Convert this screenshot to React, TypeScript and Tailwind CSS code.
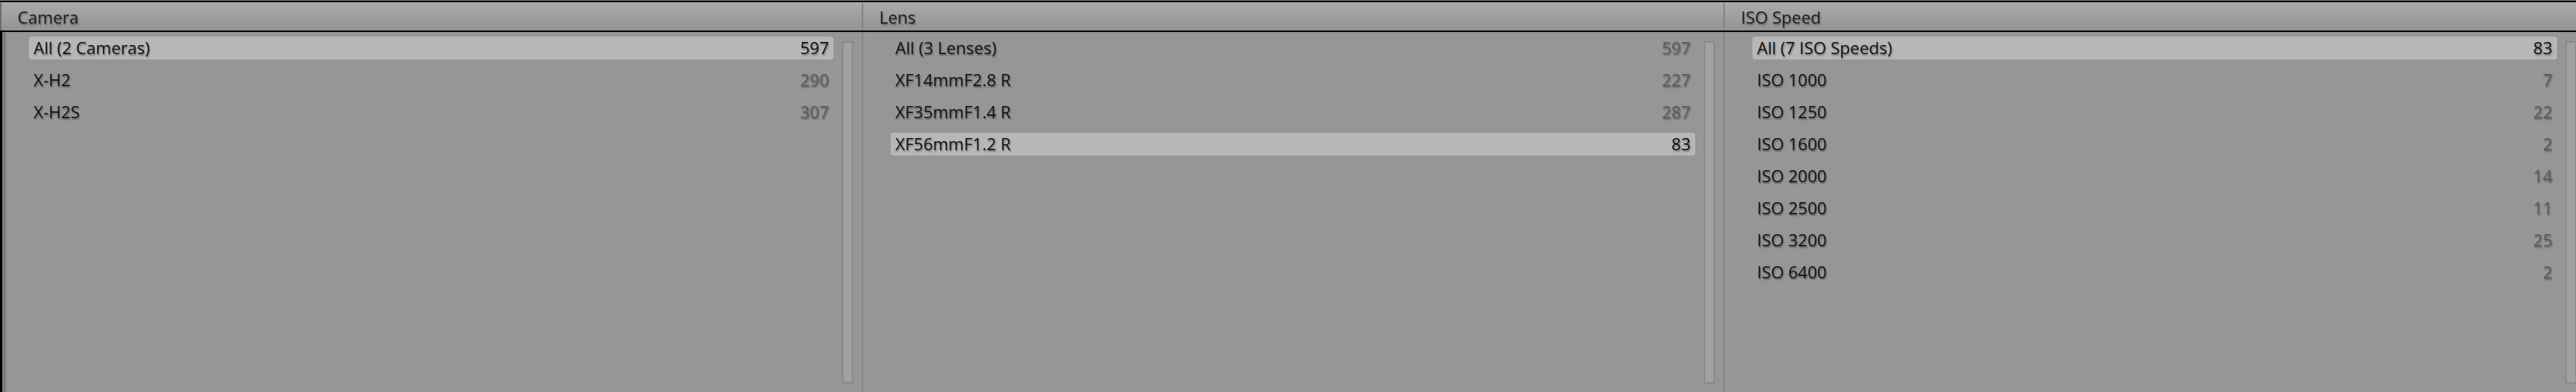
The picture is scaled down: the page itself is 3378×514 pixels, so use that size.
import React from "react";

type Row = { label: string; count: number; selected?: boolean };

const columns: { title: string; rows: Row[] }[] = [
  {
    title: "Camera",
    rows: [
      { label: "All (2 Cameras)", count: 597, selected: true },
      { label: "X-H2", count: 290 },
      { label: "X-H2S", count: 307 },
    ],
  },
  {
    title: "Lens",
    rows: [
      { label: "All (3 Lenses)", count: 597 },
      { label: "XF14mmF2.8 R", count: 227 },
      { label: "XF35mmF1.4 R", count: 287 },
      { label: "XF56mmF1.2 R", count: 83, selected: true },
    ],
  },
  {
    title: "ISO Speed",
    rows: [
      { label: "All (7 ISO Speeds)", count: 83, selected: true },
      { label: "ISO 1000", count: 7 },
      { label: "ISO 1250", count: 22 },
      { label: "ISO 1600", count: 2 },
      { label: "ISO 2000", count: 14 },
      { label: "ISO 2500", count: 11 },
      { label: "ISO 3200", count: 25 },
      { label: "ISO 6400", count: 2 },
    ],
  },
];

const shadow = "[text-shadow:1px_2px_2px_rgba(0,0,0,0.35)]";

const Column = ({ title, rows, first }: { title: string; rows: Row[]; first: boolean }) => {
  return (
    <div className="w-[1130px] shrink-0 flex flex-col">
      <div
        className={`h-[37px] flex items-center bg-gradient-to-b from-[#aaaaaa] to-[#939393] border-t border-[#b5b5b5] border-l-2 pl-[21px] ${
          first ? "border-l-[#6e6e6e]" : "border-l-[#858585]"
        }`}
      >
        <span className={`text-[22px] text-[#1e1e1e] ${shadow}`}>{title}</span>
      </div>
      <div className="h-[2px] bg-black" />
      <div
        className={`flex-1 flex pt-[6px] pb-[11px] ${
          first ? "border-l-[3px] border-black" : "border-l-2 border-[#858585]"
        }`}
      >
        {first && <div className="w-[5px] bg-[#7e7e7e] shrink-0 -mt-[6px] -mb-[11px]" />}
        <div className={`flex-1 flex flex-col gap-[12px] ${first ? "pl-[30px]" : "pl-[36px]"}`}>
          {rows.map((r) => (
            <div
              key={r.label}
              className={`h-[30px] flex items-center justify-between px-[6px] rounded-[4px] ${
                r.selected ? "bg-[#b7b7b7]" : ""
              }`}
            >
              <span className={`text-[22px] leading-[28px] -mt-[2px] text-[#141414] ${shadow}`}>{r.label}</span>
              <span
                className={`text-[22px] leading-[28px] -mt-[2px] ${
                  r.selected ? "text-[#101010]" : "text-[#5c5c5c]"
                } ${shadow}`}
              >
                {r.count}
              </span>
            </div>
          ))}
        </div>
        <div className="w-[37px] shrink-0 pt-[6px] pl-[11px]">
          <div className="w-[15px] h-full border-2 border-[#898989] bg-[#a1a1a1]" />
        </div>
      </div>
    </div>
  );
};

export default function App() {
  return (
    <div className="w-[3378px] h-[514px] overflow-hidden bg-[#969696] flex flex-col font-['Open_Sans',sans-serif]">
      <div className="h-[1px] bg-[#7a7a7a] shrink-0" />
      <div className="h-[2px] bg-black shrink-0" />
      <div className="flex flex-1 min-h-0">
        {columns.map((c, i) => (
          <Column key={c.title} title={c.title} rows={c.rows} first={i === 0} />
        ))}
      </div>
    </div>
  );
}
